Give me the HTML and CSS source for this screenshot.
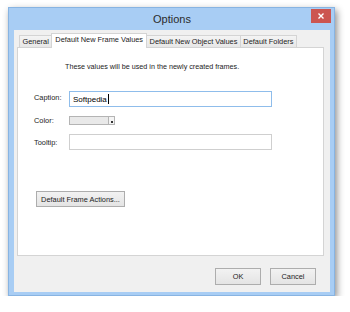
FILE: index.html
```html
<!DOCTYPE html>
<html>
<head>
<meta charset="utf-8">
<link rel="stylesheet" href="styles.css">
</head>
<body>
<div class="stage">
  <div class="window">
    <div class="titlebar">
      <span class="title">Options</span>
      <div class="close"><svg width="8" height="8" viewBox="0 0 8 8"><path d="M1.5 1.5L6.5 6.5M6.5 1.5L1.5 6.5" stroke="#fff" stroke-width="1.4"/></svg></div>
    </div>
    <div class="client">
      <div class="tabs">
        <div class="tab">General</div>
        <div class="tab active">Default New Frame Values</div>
        <div class="tab">Default New Object Values</div>
        <div class="tab">Default Folders</div>
      </div>
      <div class="panel">
        <div class="desc">These values will be used in the newly created frames.</div>
        <div class="row caption-row">
          <span class="label">Caption:</span>
          <div class="input focused"><span class="val">Softpedia</span><span class="caret"></span></div>
        </div>
        <div class="row color-row">
          <span class="label">Color:</span>
          <div class="combo"><div class="combo-btn"><span class="arrow"></span></div></div>
        </div>
        <div class="row tooltip-row">
          <span class="label">Tooltip:</span>
          <div class="input"></div>
        </div>
        <button class="btn actions">Default Frame Actions...</button>
      </div>
      <div class="footer">
        <button class="btn dlg">OK</button>
        <button class="btn dlg">Cancel</button>
      </div>
    </div>
  </div>
</div>
</body>
</html>
```
FILE: styles.css
```css
html, body {
  margin: 0;
  padding: 0;
  background: #ffffff;
  font-family: "Liberation Sans", Arial, sans-serif;
  color: #222;
}
.stage {
  padding: 7px 0 0 8px;
}
.window {
  width: 327px;
  height: 289px;
  box-sizing: border-box;
  background: #a8cdf4;
  border: 1px solid #88b4e2;
  box-shadow: 2px 3px 7px rgba(0, 0, 0, 0.45);
  display: flex;
  flex-direction: column;
  padding: 0 4px 3px 5px;
}
.titlebar {
  height: 22px;
  flex: none;
  display: flex;
  align-items: center;
  justify-content: center;
  position: relative;
}
.title {
  font-size: 11px;
  color: #2b2b2b;
}
.close {
  position: absolute;
  right: -1px;
  top: 1px;
  width: 20px;
  height: 14px;
  background: #cc5550;
  display: flex;
  align-items: center;
  justify-content: center;
}
.close svg { display: block; }
.client {
  flex: 1;
  background: #f0f0f0;
  display: flex;
  flex-direction: column;
  padding: 3px 6px 0 3px;
}
.tabs {
  display: flex;
  align-items: flex-end;
  height: 14px;
  padding-left: 2px;
  position: relative;
  z-index: 1;
}
.tab {
  height: 12px;
  box-sizing: border-box;
  border: 1px solid #d4d4d4;
  border-bottom: none;
  background: linear-gradient(#f4f4f4, #e7e7e7);
  font-size: 7.4px;
  line-height: 11px;
  padding: 0 2.5px;
  color: #222;
  white-space: nowrap;
  margin-right: -1px;
}
.tab.active {
  height: 15px;
  background: #ffffff;
  margin-bottom: -1px;
  padding: 0 3px;
  line-height: 12px;
}
.panel {
  height: 209px;
  box-sizing: border-box;
  border: 1px solid #d4d4d4;
  background: #ffffff;
  flex: none;
  display: flex;
  flex-direction: column;
  align-items: flex-start;
  padding: 14px 0 0 16px;
}
.desc {
  font-size: 7.2px;
  line-height: 9px;
  margin-left: 31px;
}
.row {
  display: flex;
  align-items: center;
}
.label {
  width: 35px;
  font-size: 7.4px;
}
.caption-row { margin-top: 20px; }
.caption-row .label { margin-top: -3px; }
.color-row { margin-top: 9px; }
.tooltip-row { margin-top: 9px; }
.input {
  width: 203px;
  height: 16px;
  box-sizing: border-box;
  border: 1px solid #cfcfcf;
  background: #fff;
  display: flex;
  align-items: center;
  padding-left: 3px;
}
.input.focused {
  border-color: #8fbdeb;
}
.val {
  font-size: 8px;
  color: #000;
}
.caret {
  width: 1px;
  height: 10px;
  background: #000;
  margin-left: 1px;
}
.combo {
  width: 46px;
  height: 9px;
  box-sizing: border-box;
  border: 1px solid #b4b4b4;
  background: #e9e9e9;
  display: flex;
  justify-content: flex-end;
}
.combo-btn {
  width: 6px;
  height: 7px;
  box-sizing: border-box;
  border-left: 1px solid #b4b4b4;
  background: #f4f4f4;
  display: flex;
  align-items: flex-end;
  justify-content: center;
  padding-bottom: 1px;
}
.arrow {
  width: 2px;
  height: 2px;
  background: #333;
}
.btn {
  font-family: "Liberation Sans", Arial, sans-serif;
  font-size: 7.4px;
  color: #222;
  background: linear-gradient(#f2f2f2, #e4e4e4);
  border: 1px solid #adadad;
  border-radius: 0;
  padding: 0;
  margin: 0;
  box-sizing: border-box;
}
.actions {
  margin-top: 41px;
  margin-left: 2px;
  width: 89px;
  height: 16px;
}
.footer {
  display: flex;
  justify-content: flex-end;
  gap: 9px;
  padding: 12px 8px 0 0;
}
.dlg {
  width: 46px;
  height: 17px;
}
```
